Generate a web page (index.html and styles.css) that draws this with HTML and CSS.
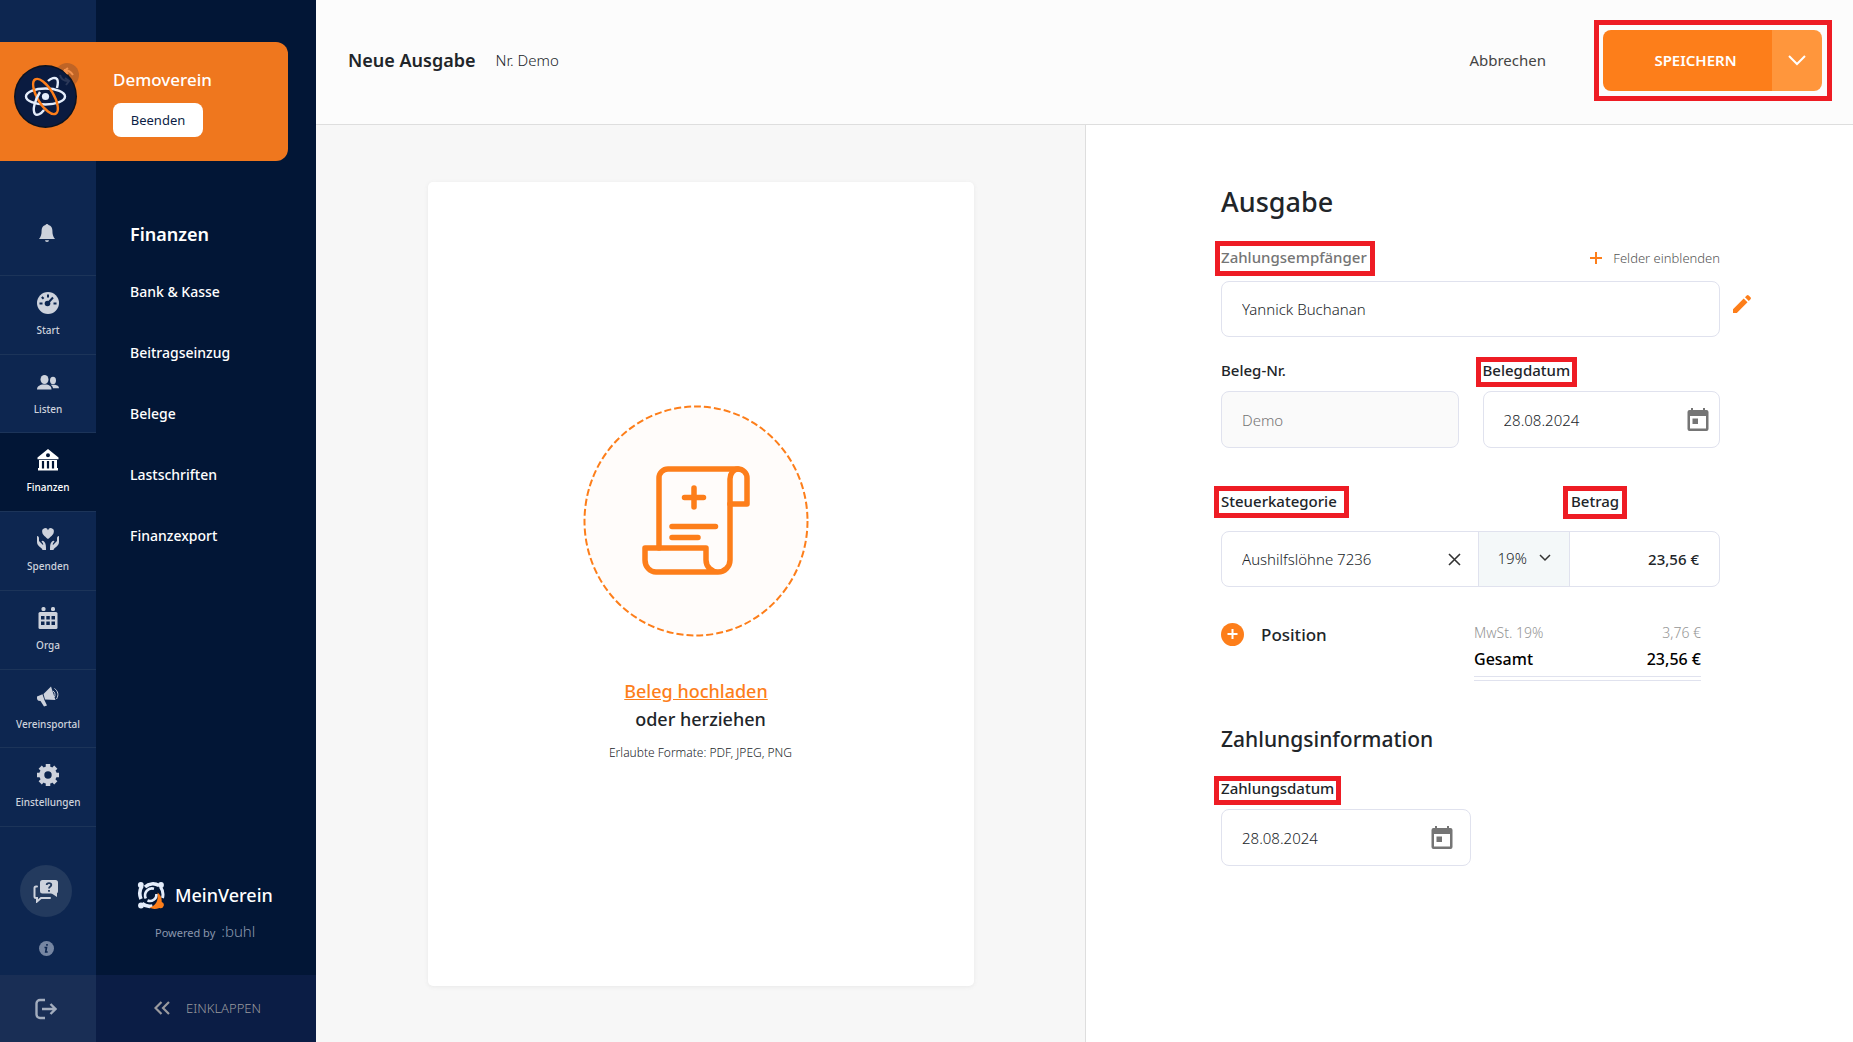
FILE: index.html
```html
<!DOCTYPE html>
<html lang="de">
<head>
<meta charset="utf-8">
<meta name="viewport" content="width=device-width, initial-scale=1">
<title>Neue Ausgabe – MeinVerein</title>
<link rel="stylesheet" href="styles.css">
</head>
<body>
<div class="app">
  <aside class="sidebar">
    <nav class="rail" aria-label="Hauptnavigation">
      <div class="rail-top">
        <button class="icon-btn" type="button" aria-label="Benachrichtigungen">
          <svg width="18" height="20" viewBox="0 0 18 20"><path fill="#cdd2dc" d="M9 1c-.8 0-1.300.4-1.500 1C4.800 2.600 3.600 5 3.600 7.500c0 4-.6 6-2.600 8.500h16c-2-2.500-2.600-4.500-2.600-8.500C14.400 5 13.200 2.600 10.500 2 10.300 1.400 9.800 1 9 1zM7 17.200a2 1.800 0 0 0 4 0z"/></svg>
        </button>
      </div>
      <ul class="rail-list">
        <li><a href="#start">
          <svg width="22" height="22" viewBox="0 0 22 22"><circle cx="11" cy="11" r="11" fill="#cdd2dc"/><g stroke="#0d2650" stroke-width="2" fill="none"><path d="M11 2.500v3M4.800 5l1.800 1.800M2.500 11.500h3M16.500 11.500h3M10.500 11.500l5.500-6"/></g><circle cx="10.500" cy="11.500" r="2.800" fill="#0d2650"/></svg>
          <span>Start</span></a></li>
        <li><a href="#listen">
          <svg width="22" height="22" viewBox="0 0 22 22" fill="#cdd2dc"><ellipse cx="7.500" cy="8.500" rx="4" ry="4.500"/><path d="M0 18.500c0-3.500 3-4.500 5-5h5c2 .5 4.500 1.500 4.500 5z"/><ellipse cx="16" cy="9.500" rx="3" ry="3.700"/><path d="M13.500 13.800h4.500c2 .4 4 1.200 4 3.400h-6c-.3-1.500-1-2.500-2.500-3.400z"/></svg>
          <span>Listen</span></a></li>
        <li class="current"><a href="#finanzen" aria-current="page">
          <svg width="22" height="22" viewBox="0 0 22 22" fill="#fff"><path fill-rule="evenodd" d="M11 0l10.500 8.500v1.800H.5V8.500zm0 4.200a2 2 0 1 0 0 4 2 2 0 0 0 0-4z"/><path d="M2 11h18v8H2z"/><path d="M1 19h20v2.500H1z"/><path stroke="#021636" stroke-width="2.200" d="M6 12v7.500M11 12v7.500M16 12v7.500"/></svg>
          <span>Finanzen</span></a></li>
        <li><a href="#spenden">
          <svg width="22" height="22" viewBox="0 0 22 22" fill="#cdd2dc"><path d="M11 11C7 7.700 5.200 6 5.200 3.700A3 3 0 0 1 11 2.200a3 3 0 0 1 5.800 1.500C16.800 6 15 7.700 11 11z"/><path d="M0 8c1.500 0 2 1 2 2.500V13l4 4c1-.8-.8-2.500-1.500-3.500.5-1.300 1.800-.8 2.500 0C9 15.500 9 18 9 22H5.500C5 19.500 0 18.500 0 14zM22 8c-1.500 0-2 1-2 2.500V13l-4 4c-1-.8.8-2.500 1.500-3.500-.5-1.300-1.800-.8-2.500 0C13 15.500 13 18 13 22h3.500c.5-2.500 5.500-3.500 5.500-8z"/></svg>
          <span>Spenden</span></a></li>
        <li><a href="#orga">
          <svg width="22" height="22" viewBox="0 0 22 22"><g fill="#cdd2dc"><rect x="1.500" y="5" width="19" height="17" rx="1.500"/><rect x="4.500" y="0" width="4" height="4" rx="1.500"/><rect x="14" y="0" width="4" height="4" rx="1.500"/></g><g fill="#0d2650"><path d="M4 9h3.500v3.500H4zM9.300 9h3.500v3.500H9.300zM14.500 9H18v3.500h-3.500zM4 14.500h3.500V18H4zM9.300 14.500h3.500V18H9.300zM14.500 14.500H18V18h-3.500z"/></g></svg>
          <span>Orga</span></a></li>
        <li><a href="#vereinsportal">
          <svg width="22" height="22" viewBox="0 0 22 22" fill="#cdd2dc"><path d="M6.500 8l7.500-7.500 4.500 13.500L8 13.500z"/><path d="M5.500 8.300L0 10.500c-.3 2 .3 3.500 1.500 4.300l2 .2L7 20.500l3-1-2.500-5.300z"/><path fill="none" stroke="#cdd2dc" d="M16 5c2 1 2.500 4 1.500 6M17.500 2.500c3.500 2.500 4.500 6.500 2 10.500"/></svg>
          <span>Vereinsportal</span></a></li>
        <li><a href="#einstellungen">
          <svg width="22" height="22" viewBox="0 0 22 22"><circle cx="11" cy="11" r="6.200" fill="none" stroke="#cdd2dc" stroke-width="5"/><g stroke="#cdd2dc" stroke-width="4.500"><path d="M11 0v4M11 18v4M0 11h4M18 11h4M3.200 3.200L6 6M16 16l2.800 2.800M3.200 18.800L6 16M16 6l2.800-2.800"/></g></svg>
          <span>Einstellungen</span></a></li>
      </ul>
      <div class="rail-help">
        <button class="chat-btn" type="button" aria-label="Hilfe">
          <svg width="26" height="24" viewBox="0 0 26 24"><rect x="7" y="1" width="18" height="13.500" rx="2.500" fill="#cdd2dc"/><path fill="#cdd2dc" d="M18 14h6v4z"/><path fill="none" stroke="#cdd2dc" stroke-width="2" stroke-linecap="round" d="M4 7.500H3a1.500 1.500 0 0 0-1.500 1.500v8.500A1.500 1.500 0 0 0 3 19h1v3.500L8 19h9"/><path fill="none" stroke="#233a5e" stroke-width="1.800" d="M13.700 6c0-2.600 4.600-2.600 4.600 0 0 1.700-2.300 1.400-2.300 3.600M16 11v1.700"/></svg>
        </button>
        <button class="icon-btn" type="button" aria-label="Information">
          <svg width="15" height="15" viewBox="0 0 15 15"><circle cx="7.500" cy="7.500" r="7.500" fill="#7686a2"/><path fill="none" stroke="#0d2650" stroke-width="1.600" d="M5.500 6.500h2L6.700 11h2M8 3v1.700"/></svg>
        </button>
      </div>
      <button class="logout" type="button" aria-label="Abmelden">
        <svg width="22" height="22" viewBox="0 0 22 22" fill="none" stroke="#a3adbe" stroke-width="2.400"><path d="M10 2H5a3.500 3.500 0 0 0-3.500 3.500v11A3.500 3.500 0 0 0 5 20h5M7 11h13M15.500 6l5 5-5 5"/></svg>
      </button>
    </nav>

    <div class="subnav">
      <h2 class="subnav-title">Finanzen</h2>
      <ul class="subnav-list">
        <li><a href="#bank">Bank &amp; Kasse</a></li>
        <li><a href="#beitrag">Beitragseinzug</a></li>
        <li><a href="#belege">Belege</a></li>
        <li><a href="#lastschriften">Lastschriften</a></li>
        <li><a href="#export">Finanzexport</a></li>
      </ul>
      <div class="brand">
        <div class="brand-name">
          <svg width="28" height="28" viewBox="0 0 28 28">
            <g fill="none" stroke="#e4edfb" stroke-width="3.600"><path d="M22 4.500A12 12 0 0 0 8 6"/><path d="M5 5A14 14 0 0 0 4 18"/><path d="M5 22.500A12 12 0 0 0 15.500 25"/><path d="M23.500 6a13 13 0 0 1 2 11" stroke-width="3"/></g>
            <g fill="none" stroke="#e4edfb" stroke-width="2.600"><path d="M8.800 17.500a7 7 0 0 1 8.200-9.800M19.500 13A6.500 6.500 0 0 1 10.500 19.500"/></g>
            <g fill="#e4edfb"><circle cx="3.800" cy="4" r="2.900"/><circle cx="24" cy="4" r="2.900"/><circle cx="4" cy="24.500" r="2.900"/></g>
            <path fill="#fd7e1a" d="M20.500 11.500c2.500 2 4.500 4.500 4.200 9.500a3 3 0 1 1-2.200 6C18 28.500 15 28 12.500 26.500c5-1 9.500-5.500 8-15z"/>
          </svg>
          <span>MeinVerein</span>
        </div>
        <div class="brand-by">Powered by <span>:buhl</span></div>
      </div>
      <button class="collapse" type="button">
        <svg width="16" height="14" viewBox="0 0 16 14" fill="none" stroke="#9a9a9e" stroke-width="2.200"><path d="M7.500 1l-6 6 6 6M15 1L9 7l6 6"/></svg>
        <span>EINKLAPPEN</span>
      </button>
    </div>

    <section class="banner">
      <svg class="avatar" width="66" height="66" viewBox="0 0 66 66">
        <circle cx="53" cy="13" r="12" fill="#bf6426"/>
        <circle cx="31.500" cy="34.500" r="31.500" fill="#0c1320"/>
        <circle cx="31.500" cy="34.500" r="30" fill="#0a1b40"/>
        <g fill="none" stroke-width="2.400">
          <ellipse cx="31.500" cy="34.500" rx="19.500" ry="8" stroke="#e4edfb"/>
          <ellipse cx="31.500" cy="34.500" rx="20" ry="8" stroke="#fd7e1a" transform="rotate(59 31.500 34.500)"/>
          <path stroke="#e4edfb" d="M30 48c-3 4-7 6-9 4-3-4 0-14 5-22M34 19c3-3 7-4 9-2 1.500 2 1 5 0 9"/>
        </g>
        <circle cx="31.500" cy="34.500" r="3.600" fill="#e4edfb"/>
        <path fill="none" stroke="#f5924c" stroke-width="2" d="M50 9l4-3M50 8c4 0 7 2 9 5M50 8l4 4"/>
        <path fill="none" stroke="#2b3858" stroke-width="2" d="M46 13c1 4 4 6 8 6M51 16l4 3-3 4"/>
      </svg>
      <div class="banner-text">
        <strong>Demoverein</strong>
        <button type="button">Beenden</button>
      </div>
    </section>
  </aside>

  <div class="page">
    <header class="topbar">
      <h1>Neue Ausgabe</h1>
      <span class="doc-no">Nr. Demo</span>
      <button class="cancel" type="button">Abbrechen</button>
      <div class="save mark mark-save">
        <button class="save-main" type="button">SPEICHERN</button>
        <button class="save-more" type="button" aria-label="Weitere Optionen">
          <svg width="18" height="11" viewBox="0 0 18 11" fill="none" stroke="#fff" stroke-width="2"><path d="M1 1l8 8 8-8"/></svg>
        </button>
      </div>
    </header>

    <main class="content">
      <section class="receipt">
        <div class="drop">
          <svg width="226" height="232" viewBox="0 0 226 232" fill="none" stroke="#fd7e1a">
            <ellipse cx="113" cy="116" rx="111.500" ry="114.500" fill="#fffcfa" stroke-width="2" stroke-dasharray="7 3"/>
            <g stroke-width="5.500" stroke-linejoin="round" stroke-linecap="round">
              <path d="M76 143V73a9 9 0 0 1 9-9h70a9 9 0 0 1 9 9v26h-17"/>
              <path d="M155 64a8 10 0 0 0-8 10v81a12 12 0 0 1-24 0v-12H62v12a11 12 0 0 0 11 12h62"/>
              <path d="M111 83v19M101.500 92.500h19M89 121.500h43.500M89 132.500h26"/>
            </g>
          </svg>
          <p class="drop-text"><a href="#upload">Beleg hochladen</a>oder herziehen</p>
          <p class="drop-hint">Erlaubte Formate: PDF, JPEG, PNG</p>
        </div>
      </section>

      <section class="entry">
        <form class="form">
          <h2>Ausgabe</h2>
          <div class="label-row">
            <label class="muted mark mark-payee" for="payee">Zahlungsempfänger</label>
            <button class="show-fields" type="button">
              <svg width="12" height="12" viewBox="0 0 12 12" stroke="#fd7e1a" stroke-width="2"><path d="M6 0v12M0 6h12"/></svg>
              Felder einblenden
            </button>
          </div>
          <div class="payee-row">
            <input class="field" id="payee" type="text" value="Yannick Buchanan">
            <button class="icon-btn" type="button" aria-label="Bearbeiten">
              <svg width="18" height="18" viewBox="0 0 18 18" fill="#fd7e1a"><path d="M0 14.200L10.700 3.500l3.800 3.800L3.800 18H0zM12 2.200L13.700.5a1.500 1.500 0 0 1 2 0l1.800 1.800a1.500 1.500 0 0 1 0 2L15.800 6z"/></svg>
            </button>
          </div>

          <div class="pair">
            <div class="group">
              <label for="docno">Beleg-Nr.</label>
              <input class="field" id="docno" type="text" placeholder="Demo" disabled>
            </div>
            <div class="group">
              <label class="mark mark-date" for="docdate">Belegdatum</label>
              <div class="field date">
                <input id="docdate" type="text" value="28.08.2024">
                <button class="icon-btn" type="button" aria-label="Kalender öffnen">
                  <svg width="22" height="24" viewBox="0 0 22 24" fill="#757575"><path fill-rule="evenodd" d="M4 0h2v2h10V0h2v2h1.500A2 2 0 0 1 21.500 4v17a2 2 0 0 1-2 2h-17a2 2 0 0 1-2-2V4a2 2 0 0 1 2-2H4zM3 8v12.500h16V8zM5.500 10.500h5.500v5.500H5.500z"/></svg>
                </button>
              </div>
            </div>
          </div>

          <div class="position">
            <label class="mark mark-tax" for="tax">Steuerkategorie</label>
            <label class="mark mark-amount" for="amount">Betrag</label>
            <div class="field combo">
              <div class="combo-tax">
                <input id="tax" type="text" value="Aushilfslöhne 7236">
                <button class="icon-btn" type="button" aria-label="Leeren">
                  <svg width="13" height="13" viewBox="0 0 13 13" stroke="#333" stroke-width="1.600"><path d="M1 1l11 11M12 1L1 12"/></svg>
                </button>
              </div>
              <div class="combo-rate">
                <select aria-label="Mehrwertsteuersatz"><option>19%</option><option>7%</option><option>0%</option></select>
                <svg width="12" height="8" viewBox="0 0 12 8" fill="none" stroke="#333" stroke-width="1.500"><path d="M1 1l5 5 5-5"/></svg>
              </div>
              <input class="combo-amount" id="amount" type="text" value="23,56 €">
            </div>
          </div>

          <div class="summary">
            <button class="add" type="button">
              <svg width="23" height="23" viewBox="0 0 23 23"><circle cx="11.500" cy="11.500" r="11.500" fill="#fd7e1a"/><path stroke="#fff" stroke-width="2" d="M11.500 6v10M6.500 11h10"/></svg>
              Position
            </button>
            <dl class="totals">
              <div><dt>MwSt. 19%</dt><dd>3,76 €</dd></div>
              <div class="total"><dt>Gesamt</dt><dd>23,56 €</dd></div>
            </dl>
          </div>

          <h3>Zahlungsinformation</h3>
          <div class="group payment">
            <label class="mark mark-pay" for="paydate">Zahlungsdatum</label>
            <div class="field date">
              <input id="paydate" type="text" value="28.08.2024">
              <button class="icon-btn" type="button" aria-label="Kalender öffnen">
                <svg width="22" height="24" viewBox="0 0 22 24" fill="#757575"><path fill-rule="evenodd" d="M4 0h2v2h10V0h2v2h1.500A2 2 0 0 1 21.500 4v17a2 2 0 0 1-2 2h-17a2 2 0 0 1-2-2V4a2 2 0 0 1 2-2H4zM3 8v12.500h16V8zM5.500 10.500h5.500v5.500H5.500z"/></svg>
              </button>
            </div>
          </div>
        </form>
      </section>
    </main>
  </div>
</div>
</body>
</html>
```
FILE: styles.css
```css
* { box-sizing: border-box; }

body {
  margin: 0;
  font-family: "Noto Sans", sans-serif;
  font-size: 15px;
  line-height: 20px;
  color: #212529;
  background: #fff;
}

h1, h2, h3, p, ul, dl, dd { margin: 0; padding: 0; }
ul { list-style: none; }
a { color: inherit; text-decoration: none; }
svg { display: block; flex: none; }

button, input, select {
  font: inherit;
  color: inherit;
  background: none;
  border: 0;
  margin: 0;
  padding: 0;
}
button { cursor: pointer; }

.icon-btn { display: flex; flex: none; }

.app {
  display: grid;
  grid-template-columns: 316px 1fr;
  min-height: 100vh;
}

/* Sidebar */
.sidebar {
  position: relative;
  display: grid;
  grid-template-columns: 96px 1fr;
  color: #fff;
}

.rail {
  display: flex;
  flex-direction: column;
  background: #0d2650;
}

.rail-top {
  display: flex;
  justify-content: center;
  align-items: flex-end;
  height: 275px;
  padding: 0 2px 32px 0;
}

.rail-list {
  display: grid;
  grid-template-rows: repeat(7, 1fr);
  height: 552px;
  border-bottom: 1px solid #1c3459;
}
.rail-list li { border-top: 1px solid #1c3459; }
.rail-list a {
  display: flex;
  flex-direction: column;
  align-items: center;
  gap: 9px;
  padding-top: 16px;
  font-size: 10px;
  font-weight: 500;
  line-height: 14px;
  color: #cdd2dc;
}
.rail-list .current { background: #021636; }
.rail-list .current a { color: #fff; }

.rail-help {
  display: flex;
  flex: 1;
  flex-direction: column;
  align-items: center;
  justify-content: flex-end;
  gap: 24px;
  padding: 0 4px 19px 0;
}
.chat-btn {
  display: grid;
  place-items: center;
  width: 52px;
  height: 52px;
  border-radius: 50%;
  background: #233a5e;
}

.logout, .collapse {
  display: flex;
  align-items: center;
  justify-content: center;
  height: 67px;
}
.logout { padding-right: 4px; background: #192e55; }

.subnav {
  display: flex;
  flex-direction: column;
  background: #021636;
}
.subnav-title {
  padding: 222px 0 0 34px;
  font-size: 18px;
  font-weight: 600;
  line-height: 24px;
}
.subnav-list {
  display: grid;
  gap: 41px;
  padding: 36px 0 0 34px;
  font-size: 14px;
  font-weight: 500;
}
.brand {
  display: flex;
  flex-direction: column;
  gap: 12px;
  margin-top: auto;
  padding: 0 0 32px 41px;
}
.brand-name {
  display: flex;
  align-items: center;
  gap: 10px;
  font-size: 18px;
  font-weight: 500;
}
.brand-by {
  display: flex;
  align-items: baseline;
  gap: 6px;
  padding-left: 18px;
  font-size: 11px;
  line-height: 20px;
  color: #8a97ad;
}
.brand-by span { font-size: 15px; font-weight: 300; }
.collapse {
  gap: 16px;
  padding: 0 0 2px 3px;
  background: #0b1d45;
  color: #9a9a9e;
  font-size: 13px;
  font-weight: 300;
}

/* Club banner lies across both sidebar columns */
.banner {
  position: absolute;
  top: 42px;
  left: 0;
  right: 28px;
  display: flex;
  gap: 33px;
  padding: 20px 0 23px 14px;
  border-radius: 0 12px 12px 0;
  background: #ef771e;
}
.avatar { margin-bottom: 10px; }
.banner-text {
  display: flex;
  flex-direction: column;
  align-items: flex-start;
  gap: 12px;
  padding-top: 7px;
}
.banner-text strong { font-size: 17px; font-weight: 500; line-height: 22px; }
.banner-text button {
  width: 90px;
  height: 34px;
  border-radius: 8px;
  background: #fff;
  color: #0b1d45;
  font-size: 13px;
}

/* Page head */
.page { display: flex; flex-direction: column; min-width: 0; }

.topbar {
  display: flex;
  align-items: center;
  height: 125px;
  padding: 0 31px 4px 32px;
  border-bottom: 1px solid #dedede;
  background: #fcfcfc;
}
.topbar h1 { font-size: 18px; font-weight: 600; }
.doc-no { margin-left: 20px; font-weight: 300; }
.cancel { margin: 0 57px 0 auto; color: #444; }
.save { display: flex; color: #fff; }
.save-main {
  width: 169px;
  height: 61px;
  padding-left: 16px;
  border-radius: 8px 0 0 8px;
  background: #fd7e1a;
  font-weight: 600;
}
.save-more {
  display: grid;
  place-items: center;
  width: 50px;
  border-radius: 0 8px 8px 0;
  background: #ff963c;
}

/* Red frames that point out the required controls */
.mark { position: relative; }
.mark::after {
  content: "";
  position: absolute;
  inset: -5px -8px -8px;
  border: 5px solid #ee1c24;
  pointer-events: none;
}
.mark-save::after { inset: -10px -10px -10px -9px; }
.mark-payee::after { inset: -6px -8px -9px -6px; }
.mark-date::after { inset: -3px -7px -7px; }
.mark-tax::after { inset: -5px -12px -7px -7px; }
.mark-pay::after { inset: -2px -7px -7px; }

/* Content */
.content {
  display: grid;
  flex: 1;
  grid-template-columns: 50.1% 1fr;
}
.receipt {
  display: flex;
  justify-content: center;
  padding: 57px 0 56px;
  border-right: 1px solid #dedede;
  background: #f7f7f7;
}
.drop {
  display: flex;
  flex-direction: column;
  align-items: center;
  justify-content: center;
  width: 71%;
  border-radius: 5px;
  background: #fff;
  box-shadow: 0 1px 4px #e8e8e8;
}
.drop svg, .drop-text a { margin-right: 9px; }
.drop-text {
  margin-top: 40px;
  font-size: 18px;
  font-weight: 500;
  line-height: 28px;
  text-align: center;
}
.drop-text a {
  display: block;
  color: #fd7e1a;
  text-decoration: underline;
}
.drop-hint {
  margin-top: 10px;
  font-size: 12px;
  font-weight: 300;
}

.entry { padding: 0 46px 0 48px; }
.form {
  max-width: 499px;
  margin: 0 auto;
  padding: 59px 0 40px;
}
.form h2 { font-size: 27px; font-weight: 500; line-height: 36px; }
.form h3 {
  margin-top: 44px;
  font-size: 21px;
  font-weight: 500;
  line-height: 28px;
}
.form label { font-weight: 500; }
.form .muted { color: #757575; }

.label-row {
  display: flex;
  align-items: center;
  justify-content: space-between;
  margin-top: 26px;
}
.show-fields {
  display: flex;
  align-items: center;
  gap: 11px;
  padding-top: 2px;
  color: #555;
  font-size: 13px;
  font-weight: 300;
}

.field {
  width: 100%;
  height: 57px;
  padding: 0 20px;
  border: 1px solid #e0e2ee;
  border-radius: 8px;
  font-weight: 300;
}
.field:disabled { background: #fafafa; }
.field::placeholder { color: #757575; opacity: 1; }

.payee-row {
  display: flex;
  align-items: center;
  gap: 13px;
  margin: 13px -31px 0 0;
}
.payee-row .icon-btn { padding-bottom: 10px; }
.payee-row .field, .combo { height: 56px; }

.pair {
  display: grid;
  grid-template-columns: 1fr 1fr;
  gap: 24px;
  margin-top: 23px;
}
.group {
  display: flex;
  flex-direction: column;
  align-items: flex-start;
  gap: 11px;
  min-width: 0;
}
.date {
  display: flex;
  align-items: center;
  padding-right: 10px;
}
.date input { flex: 1; min-width: 0; }

.position {
  display: grid;
  grid-template-columns: 350px 1fr;
  justify-items: start;
  row-gap: 20px;
  margin-top: 43px;
}
.combo {
  display: grid;
  grid-column: 1 / -1;
  grid-template-columns: minmax(0, 1fr) 92px 149px;
  padding: 0;
  overflow: hidden;
}
.combo-tax {
  display: flex;
  align-items: center;
  padding: 0 17px 0 20px;
}
.combo-tax input { flex: 1; min-width: 0; }
.combo-rate {
  display: flex;
  align-items: center;
  justify-content: center;
  gap: 11px;
  padding-bottom: 3px;
  border: solid #e0e2ee;
  border-width: 0 1px;
  background: #f4f8f9;
}
.combo-rate select { appearance: none; width: 30px; }
.combo-amount {
  width: 100%;
  padding-right: 20px;
  font-weight: 500;
  text-align: right;
}

.summary {
  display: flex;
  align-items: flex-start;
  justify-content: space-between;
  margin-top: 36px;
}
.add {
  display: flex;
  align-items: center;
  gap: 17px;
  font-size: 17px;
  font-weight: 500;
}
.totals {
  width: 227px;
  margin-right: 19px;
  padding-bottom: 3px;
  border-bottom: 1px solid #e0e2ee;
}
.totals div {
  display: flex;
  justify-content: space-between;
  color: #959595;
  font-size: 14px;
  font-weight: 300;
}
.totals .total {
  margin-top: 6px;
  padding-bottom: 7px;
  border-bottom: 1px solid #e0e2ee;
  color: #000;
  font-size: 16px;
  font-weight: 500;
}
.payment { max-width: 250px; margin-top: 25px; }
.payment .date { padding-right: 17px; }
```
